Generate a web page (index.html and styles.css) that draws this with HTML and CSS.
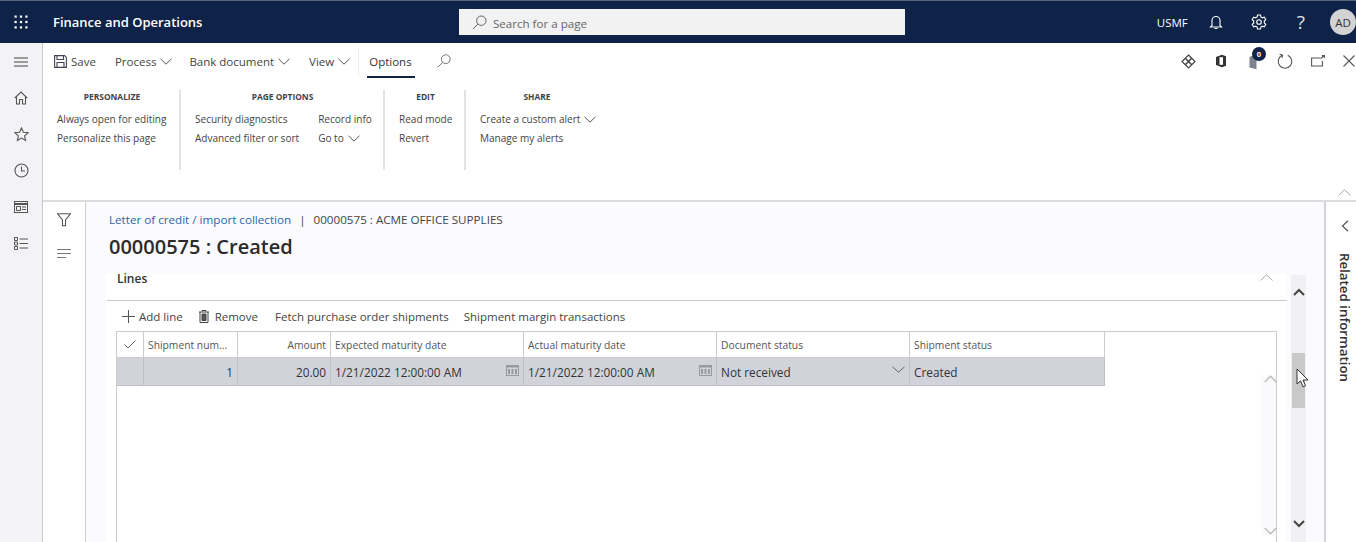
FILE: index.html
```html
<!DOCTYPE html>
<html lang="en">
<head>
<meta charset="utf-8">
<title>Finance and Operations</title>
<link rel="stylesheet" href="styles.css">
</head>
<body>
<header class="topbar">
  <div class="waffle">
    <svg width="14" height="14" viewBox="0 0 14 14" fill="#fff"><rect x="0.500" y="0.500" width="2.200" height="2.200"/><rect x="5.900" y="0.500" width="2.200" height="2.200"/><rect x="11.300" y="0.500" width="2.200" height="2.200"/><rect x="0.500" y="5.900" width="2.200" height="2.200"/><rect x="5.900" y="5.900" width="2.200" height="2.200"/><rect x="11.300" y="5.900" width="2.200" height="2.200"/><rect x="0.500" y="11.300" width="2.200" height="2.200"/><rect x="5.900" y="11.300" width="2.200" height="2.200"/><rect x="11.300" y="11.300" width="2.200" height="2.200"/></svg>
  </div>
  <div class="brand">Finance and Operations</div>
  <div class="searchbox">
    <svg class="searchbox-icon" width="15" height="15" viewBox="0 0 15 15" fill="none" stroke="#666" stroke-width="1"><circle cx="9.3" cy="5.7" r="4.7"/><path d="M5.9 9.1 1 14"/></svg>
    <span class="searchbox-text">Search for a page</span>
  </div>
  <div class="top-right">
    <span class="company">USMF</span>
    <svg class="top-bell" width="14" height="15" viewBox="0 0 14 15" fill="none" stroke="#fff" stroke-width="1.1"><path d="M3 10.5V5.5a4 4 0 0 1 8 0v5l1.5 1.5h-11zM5.5 13.5h3"/></svg>
    <svg class="top-gear" width="16" height="16" viewBox="0 0 16 16" fill="none" stroke="#fff" stroke-width="1.1"><path d="M6.5 1h3l.4 2 1.5.8 1.9-.7 1.5 2.6-1.5 1.4v1.8l1.5 1.4-1.5 2.6-1.9-.7-1.5.8-.4 2h-3l-.4-2-1.5-.8-1.9.7L1.2 10.300l1.5-1.400V7.100L1.200 5.700l1.500-2.600 1.900.7 1.500-.8z"/><circle cx="8" cy="8" r="2.300"/></svg>
    <span class="help">?</span>
    <span class="avatar">AD</span>
  </div>
</header>

<div class="shell">
  <nav class="sidebar">
    <svg width="14" height="10" viewBox="0 0 14 10" stroke="#444" fill="none"><path d="M0 1h14M0 5h14M0 9h14"/></svg>
    <svg width="14" height="14" viewBox="0 0 14 14" stroke="#555" fill="none" stroke-width="1.1"><path d="M.8 7 7 1l6.200 6M2.500 5.500V13h3V8.500h3V13h3V5.500"/></svg>
    <svg width="15" height="15" viewBox="0 0 15 15" stroke="#555" fill="none" stroke-width="1.1"><path d="M7.500 1l1.900 4.300 4.600.5-3.400 3.100 1 4.600-4.100-2.400-4.100 2.400 1-4.600L1 5.800l4.600-.5z"/></svg>
    <svg width="15" height="15" viewBox="0 0 15 15" stroke="#555" fill="none" stroke-width="1.1"><circle cx="7.500" cy="7.500" r="6.500"/><path d="M7.500 3.500v4.500h3.500"/></svg>
    <svg width="14" height="12" viewBox="0 0 14 12" stroke="#555" fill="none"><rect x=".5" y=".5" width="13" height="11"/><path d="M.5 3h13" stroke-width="2"/><path d="M2.500 5.500h4v4h-4zM8 6h4M8 8.500h4"/></svg>
    <svg width="14" height="13" viewBox="0 0 14 13" stroke="#555" fill="none"><path d="M.5.500h3v3h-3zM.5 5h3v3h-3zM.5 9.500h3v3h-3zM5.500 2h8.500M5.500 6.500h8.500M5.500 11h8.500"/></svg>
  </nav>

  <div class="workspace">
    <section class="ribbon">
      <div class="tabs">
        <span class="tab tab-save">
          <svg width="13" height="13" viewBox="0 0 13 13" fill="none" stroke="#445" stroke-width="1.100"><path d="M.6.600h10l1.800 1.800v10H.6z"/><path d="M3 .8v3.700h6.500V.8M3 12.300V7.500h7v4.800"/></svg>
          Save
        </span>
        <span class="tab tab-process">Process <svg class="chev" width="12" height="7" viewBox="0 0 12 7" fill="none" stroke="#555"><path d="M.5.800 6 6.200 11.500.8"/></svg></span>
        <span class="tab tab-bank">Bank document <svg class="chev" width="12" height="7" viewBox="0 0 12 7" fill="none" stroke="#555"><path d="M.5.800 6 6.200 11.500.8"/></svg></span>
        <span class="tab tab-view">View <svg class="chev" width="12" height="7" viewBox="0 0 12 7" fill="none" stroke="#555"><path d="M.5.800 6 6.200 11.500.8"/></svg></span>
        <span class="tab tab-options">Options</span>
        <svg class="tab-search" width="14" height="14" viewBox="0 0 14 14" fill="none" stroke="#777"><circle cx="8.800" cy="5.200" r="4.400"/><path d="M5.600 8.400 1 13"/></svg>
        <div class="tab-tools">
          <svg class="tool-diamond" width="15" height="15" viewBox="0 0 15 15" fill="none" stroke="#444" stroke-width="1.200"><path d="M7.500 1 14 7.500 7.500 14 1 7.500z"/><path d="M4.300 4.300 10.700 10.700M10.700 4.300 4.300 10.700" stroke-width="1.500"/></svg>
          <svg class="tool-office" width="12" height="14" viewBox="0 0 12 14"><path d="M1 3 7 .8l4 1.500v9.400L7 13.200 1 11z" fill="#333"/><path d="M4.500 3.200H8v7.600H4.500z" fill="#fff"/></svg>
          <span class="badge-wrap">
            <svg width="8" height="17" viewBox="0 0 8 17"><path d="M.5 4 7.500.8v15.400L.5 14.500z" fill="#7d8190"/></svg>
            <span class="badge">0</span>
          </span>
          <svg width="16" height="16" viewBox="0 0 16 16" fill="none" stroke="#555" stroke-width="1.100"><path d="M10.800 2.300a6.800 6.800 0 1 1-5.600 0"/><path d="M2.600 1.300 5.600 2.200 4.800 5"/></svg>
          <svg width="14" height="12" viewBox="0 0 14 12" fill="none" stroke="#555" stroke-width="1.100"><path d="M9 3H.6v8h10.800V6M9.500 3.500 13 1M11 .6h2.400V3"/></svg>
          <svg width="12" height="12" viewBox="0 0 12 12" fill="none" stroke="#555" stroke-width="1.100"><path d="M.5.500l11 11M11.500.500l-11 11"/></svg>
        </div>
      </div>
      <div class="groups">
        <div class="group group-personalize">
          <h3>PERSONALIZE</h3>
          <div class="item">Always open for editing</div>
          <div class="item">Personalize this page</div>
        </div>
        <div class="group group-page">
          <h3>PAGE OPTIONS</h3>
          <div class="group-cols">
            <div>
              <div class="item">Security diagnostics</div>
              <div class="item">Advanced filter or sort</div>
            </div>
            <div>
              <div class="item">Record info</div>
              <div class="item">Go to <svg class="chev" width="12" height="7" viewBox="0 0 12 7" fill="none" stroke="#555"><path d="M.5.800 6 6.200 11.500.8"/></svg></div>
            </div>
          </div>
        </div>
        <div class="group group-edit">
          <h3>EDIT</h3>
          <div class="item">Read mode</div>
          <div class="item">Revert</div>
        </div>
        <div class="group group-share">
          <h3>SHARE</h3>
          <div class="item">Create a custom alert <svg class="chev" width="12" height="7" viewBox="0 0 12 7" fill="none" stroke="#555"><path d="M.5.800 6 6.200 11.500.8"/></svg></div>
          <div class="item">Manage my alerts</div>
        </div>
      </div>
      <svg class="ribbon-collapse" width="13" height="7" viewBox="0 0 13 7" fill="none" stroke="#aaa"><path d="M.5 6.500 6.500.8l6 5.700"/></svg>
    </section>

    <div class="below">
      <aside class="filterpane">
        <svg width="14" height="14" viewBox="0 0 14 14" fill="none" stroke="#555" stroke-width="1.100"><path d="M.6.800h12.800L8.500 7v5.800H5.500V7z"/></svg>
        <svg width="14" height="9" viewBox="0 0 14 9" fill="none" stroke="#777"><path d="M0 .5h14M0 4.500h14M0 8.500h9"/></svg>
      </aside>

      <main class="main">
        <div class="crumbs"><a class="crumb-link">Letter of credit / import collection</a><span class="crumb-sep">|</span><span>00000575 : ACME OFFICE SUPPLIES</span></div>
        <h1 class="title">00000575 : Created</h1>
        <div class="lines-area">
          <section class="lines">
            <div class="lines-head">
              <h2>Lines</h2>
              <svg width="13" height="7" viewBox="0 0 13 7" fill="none" stroke="#aaa"><path d="M.5 6.500 6.500.8l6 5.700"/></svg>
            </div>
            <div class="toolbar">
              <span class="tool tool-add"><svg width="13" height="13" viewBox="0 0 13 13" fill="none" stroke="#555"><path d="M6.500 0v13M0 6.500h13"/></svg>Add line</span>
              <span class="tool tool-remove"><svg width="10" height="13" viewBox="0 0 10 13" fill="none" stroke="#444"><path d="M0 2h10M3 1.500V.5h4v1M1 2v10.500h8V2"/><path d="M3 4v6.500h4V4z" fill="#555"/></svg>Remove</span>
              <span class="tool">Fetch purchase order shipments</span>
              <span class="tool">Shipment margin transactions</span>
            </div>
            <div class="gridwrap">
              <div class="grid">
                <div class="hc hc-check"><svg width="12" height="9" viewBox="0 0 12 9" fill="none" stroke="#666"><path d="M.5 4.500 4 8l7.500-7.500"/></svg></div>
                <div class="hc">Shipment num...</div>
                <div class="hc right">Amount</div>
                <div class="hc">Expected maturity date</div>
                <div class="hc">Actual maturity date</div>
                <div class="hc">Document status</div>
                <div class="hc">Shipment status</div>
                <div class="rc"></div>
                <div class="rc right">1</div>
                <div class="rc right">20.00</div>
                <div class="rc between">1/21/2022 12:00:00 AM<svg width="13" height="12" viewBox="0 0 13 12" fill="#9a9aa2"><path d="M0 1h13v11H0z"/><path d="M1 3.500h11V11H1z" fill="#d2d3da"/><path d="M2 5h2v5H2zM5.500 5h2v5h-2zM9 5h2v5H9z"/></svg></div>
                <div class="rc between">1/21/2022 12:00:00 AM<svg width="13" height="12" viewBox="0 0 13 12" fill="#9a9aa2"><path d="M0 1h13v11H0z"/><path d="M1 3.500h11V11H1z" fill="#d2d3da"/><path d="M2 5h2v5H2zM5.500 5h2v5h-2zM9 5h2v5H9z"/></svg></div>
                <div class="rc between">Not received<svg width="13" height="7" viewBox="0 0 13 7" fill="none" stroke="#666"><path d="M.5.800 6.500 6.200 12.500.8"/></svg></div>
                <div class="rc">Created</div>
              </div>
              <div class="inner-scroll">
                <svg width="13" height="8" viewBox="0 0 13 8" fill="none" stroke="#bbb" stroke-width="1.300"><path d="M.8 7 6.500 1.200 12.200 7"/></svg>
                <svg width="13" height="8" viewBox="0 0 13 8" fill="none" stroke="#bbb" stroke-width="1.300"><path d="M.8 1 6.500 6.800 12.200 1"/></svg>
              </div>
            </div>
          </section>
          <div class="scrollbar">
            <svg width="12" height="8" viewBox="0 0 12 8" fill="none" stroke="#444" stroke-width="2"><path d="M1 7 6 2l5 5"/></svg>
            <div class="thumb"></div>
            <svg width="12" height="8" viewBox="0 0 12 8" fill="none" stroke="#444" stroke-width="2"><path d="M1 1l5 5 5-5"/></svg>
          </div>
          <svg class="cursor" width="14" height="20" viewBox="0 0 14 20"><path d="M1 1v15l3.500-3.200 2.500 6 2.500-1-2.500-5.800H12z" fill="#fff" stroke="#333"/></svg>
        </div>
      </main>

      <aside class="related">
        <svg width="8" height="12" viewBox="0 0 8 12" fill="none" stroke="#555" stroke-width="1.200"><path d="M7 .8 1.500 6 7 11.200"/></svg>
        <span class="related-label">Related information</span>
      </aside>
    </div>
  </div>
</div>
</body>
</html>
```
FILE: styles.css
```css
* { box-sizing: border-box; }
html, body { margin: 0; height: 542px; overflow: hidden; }
body {
  font-family: "Open Sans", "Noto Sans", "Liberation Sans", sans-serif;
  font-size: 11px;
  color: #3a3a3a;
  background: #fff;
}
svg { display: block; flex: none; }

.topbar {
  height: 43px;
  border-top: 1px solid #5a6478;
  background: #0f2349;
  color: #fff;
  display: flex;
  align-items: center;
}
.waffle { width: 53px; padding-left: 14px; }
.brand { font-size: 13px; font-weight: 600; width: 406px; white-space: nowrap; }
.searchbox {
  width: 446px;
  height: 26px;
  background: #f2f2f2;
  color: #666;
  font-size: 11.6px;
  display: flex;
  align-items: center;
  gap: 6px;
  padding-left: 13px;
}
.searchbox-text { padding-top: 2px; }
.top-right { flex: 1; display: flex; align-items: center; padding-left: 252px; height: 100%; }
.company { font-size: 11.5px; font-weight: 500; width: 52px; }
.top-gear { margin-left: 28px; }
.help { font-size: 19px; margin-left: 30px; color: #dfe2e8; line-height: 1; }
.avatar {
  margin-left: 25px;
  width: 26px; height: 26px; border-radius: 50%;
  background: #d3d3d3; color: #333;
  display: flex; align-items: center; justify-content: center;
  font-size: 11.5px; flex: none;
}

.shell { display: flex; height: 499px; }
.sidebar {
  width: 43px;
  background: #f3f3f6;
  border-right: 1px solid #c8c8cc;
  display: grid;
  grid-auto-rows: 36.2px;
  align-items: center;
  justify-items: center;
  align-content: start;
  padding-top: 1px;
  flex: none;
}
.workspace { flex: 1; display: flex; flex-direction: column; min-width: 0; }

.ribbon { height: 159px; border-bottom: 2px solid #dcdce0; position: relative; flex: none; }
.tabs { display: flex; align-items: center; height: 36px; padding-left: 11px; font-size: 11.5px; color: #444; }
.tab { display: flex; align-items: center; gap: 4px; white-space: nowrap; height: 100%; }
.tab-process { margin-left: 19px; }
.tab-bank { margin-left: 17px; }
.tab-view { margin-left: 19px; }
.tab-options {
  margin-left: 8px; padding: 0 3px 0 10px; font-weight: 500; color: #333;
  border-left: 1px solid #ececec;
  height: 28px; position: relative;
}
.tab-options::after {
  content: ""; position: absolute; left: 8px; right: 0; bottom: -3px; height: 2px; background: #0f2349;
}
.tab-search { margin-left: 22px; margin-top: -1px; }
.tab-tools { margin-left: auto; display: flex; align-items: center; gap: 18px; padding-right: 1px; }
.tool-diamond { margin-right: 1px; }
.tool-office { margin-right: 4px; }
.badge-wrap { position: relative; width: 10px; height: 17px; }
.badge {
  position: absolute; left: 3px; top: -6px; width: 14px; height: 14px; border-radius: 50%;
  background: #0f2349; color: #fff; font-size: 7.5px; font-weight: 700;
  display: flex; align-items: center; justify-content: center;
}

.groups { display: flex; padding-top: 11px; }
.group { height: 80px; border-right: 2px solid #e1e4e4; padding-left: 14px; flex: none; }
.group h3 { margin: 0 0 6px; font-size: 8.4px; font-weight: 700; line-height: 14px; color: #444; text-align: center; }
.item { font-size: 10.05px; line-height: 19px; white-space: nowrap; display: flex; align-items: center; gap: 4px; color: #444; }
.group-personalize { width: 138px; padding-right: 12px; }
.group-page { width: 204px; padding-right: 13px; }
.group-edit { width: 81px; padding-right: 12px; }
.group-share { width: 128px; border-right: 0; padding-right: 0; }
.group-cols { display: flex; gap: 19px; }

.ribbon-collapse { position: absolute; right: 5px; bottom: 4px; }

.below { flex: 1; display: flex; min-height: 0; }
.filterpane {
  width: 43px; flex: none;
  border-right: 1px solid #cfcfd2;
  display: flex; flex-direction: column; align-items: center;
  gap: 22px; padding-top: 11px;
  background: #fff;
}
.main { flex: 1; min-width: 0; padding: 10px 0 0 23px; background: #fbfafd; position: relative; overflow: hidden; }
.crumbs { font-size: 11.65px; line-height: 16px; white-space: nowrap; color: #444; }
.crumb-link { color: #2e63ad; }
.crumb-sep { margin: 0 8px; }
.title { margin: 5px 0 0; font-size: 20px; font-weight: 600; line-height: 28px; color: #2b2b2b; }

.lines-area { display: flex; margin: 13px 0 0 -4px; position: relative; }
.lines { width: 1182px; background: #fff; flex: none; }
.lines-head { height: 27px; border-bottom: 1px solid #c8c8c8; margin-left: 2px; display: flex; align-items: flex-start; justify-content: space-between; padding: 0 14px 0 10px; }
.lines-head h2 { margin: -3px 0 0; font-size: 12px; font-weight: 600; line-height: 16px; color: #333; }
.toolbar { display: flex; align-items: center; height: 30px; padding-left: 17px; font-size: 11.5px; gap: 15px; color: #444; }
.tool { display: flex; align-items: center; gap: 4px; white-space: nowrap; }
.tool-remove { gap: 6px; margin: 0 2px 0 1px; }
.gridwrap { margin-left: 11px; width: 1161px; height: 240px; border: 1px solid #ccc; border-bottom: 0; display: flex; background: #fff; }
.grid { display: grid; grid-template-columns: 27px 94px 93px 193px 193px 193px 195px; grid-template-rows: 26px 28px; align-content: start; width: 988px; flex: none; }
.hc {
  font-size: 10.3px; color: #555; display: flex; align-items: center; padding: 0 4px;
  border-right: 1px solid #ccc; border-bottom: 1px solid #ccc; white-space: nowrap;
}
.hc-check { justify-content: center; padding: 0; }
.rc {
  background: #d2d3da; font-size: 11.8px; color: #333; display: flex; align-items: center; padding: 0 4px;
  border-right: 1px solid #bfc0c6; border-bottom: 1px solid #bfc0c6; white-space: nowrap;
}
.right { justify-content: flex-end; }
.between { justify-content: space-between; }
.between svg { margin-top: -4px; }
.inner-scroll { margin-left: auto; width: 15px; padding-left: 3px; background: #faf9fc; display: flex; flex-direction: column; align-items: center; justify-content: space-between; height: 160px; margin-top: 43px; }

.scrollbar { margin: 1px 0 0 4px; width: 15px; background: #f1f1f3; display: flex; flex-direction: column; align-items: center; padding-top: 13px; height: 268px; flex: none; }
.thumb { width: 13px; height: 55px; background: #c9c9c9; margin-top: 57px; }
.scrollbar svg:last-child { margin-top: 112px; }
.cursor { position: absolute; left: 1191px; top: 94px; }

.related { width: 32px; flex: none; border-left: 2px solid #d4d4d8; background: #fff; display: flex; flex-direction: column; align-items: center; padding: 18px 0 0 8px; }
.related-label { writing-mode: vertical-rl; font-size: 13.3px; font-weight: 600; margin-top: 21px; color: #333; white-space: nowrap; }
```
